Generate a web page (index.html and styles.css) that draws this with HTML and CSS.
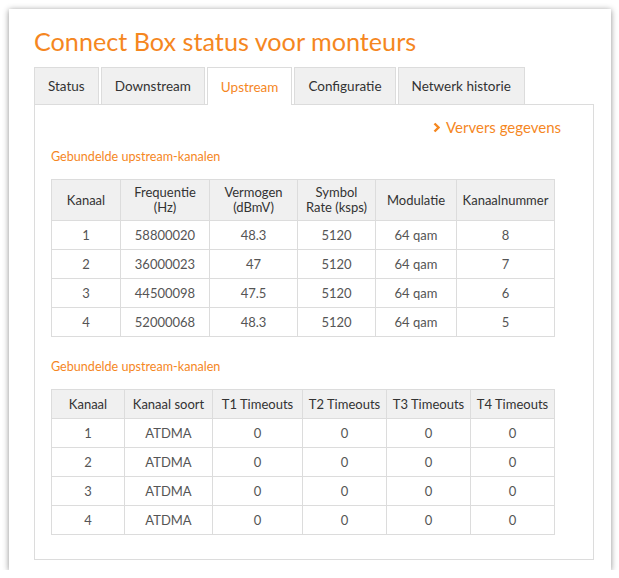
FILE: index.html
```html
<!DOCTYPE html>
<html>
<head>
<meta charset="utf-8">
<link rel="stylesheet" href="styles.css">
</head>
<body>
<div class="card">
  <h1 class="title">Connect Box status voor monteurs</h1>
  <ul class="tabs">
    <li class="tab">Status</li>
    <li class="tab">Downstream</li>
    <li class="tab active">Upstream</li>
    <li class="tab">Configuratie</li>
    <li class="tab">Netwerk historie</li>
  </ul>
  <div class="panel">
    <div class="refresh"><svg class="chev" width="7" height="11" viewBox="0 0 7 11"><polyline points="1.5,1.5 5.5,5.5 1.5,9.5" fill="none" stroke="#f5871f" stroke-width="2.4"/></svg><span>Ververs gegevens</span></div>
    <h2 class="section">Gebundelde upstream-kanalen</h2>
    <table class="grid grid1">
      <colgroup><col style="width:69px"><col style="width:89px"><col style="width:88px"><col style="width:78px"><col style="width:81px"><col style="width:98px"></colgroup>
      <thead>
        <tr class="tall"><th>Kanaal</th><th>Frequentie<br>(Hz)</th><th>Vermogen<br>(dBmV)</th><th>Symbol<br>Rate (ksps)</th><th>Modulatie</th><th>Kanaalnummer</th></tr>
      </thead>
      <tbody>
        <tr><td>1</td><td>58800020</td><td>48.3</td><td>5120</td><td>64 qam</td><td>8</td></tr>
        <tr><td>2</td><td>36000023</td><td>47</td><td>5120</td><td>64 qam</td><td>7</td></tr>
        <tr><td>3</td><td>44500098</td><td>47.5</td><td>5120</td><td>64 qam</td><td>6</td></tr>
        <tr><td>4</td><td>52000068</td><td>48.3</td><td>5120</td><td>64 qam</td><td>5</td></tr>
      </tbody>
    </table>
    <h2 class="section second">Gebundelde upstream-kanalen</h2>
    <table class="grid">
      <colgroup><col style="width:73px"><col style="width:88px"><col style="width:90px"><col style="width:84px"><col style="width:84px"><col style="width:84px"></colgroup>
      <thead>
        <tr><th>Kanaal</th><th>Kanaal soort</th><th>T1 Timeouts</th><th>T2 Timeouts</th><th>T3 Timeouts</th><th>T4 Timeouts</th></tr>
      </thead>
      <tbody>
        <tr><td>1</td><td>ATDMA</td><td>0</td><td>0</td><td>0</td><td>0</td></tr>
        <tr><td>2</td><td>ATDMA</td><td>0</td><td>0</td><td>0</td><td>0</td></tr>
        <tr><td>3</td><td>ATDMA</td><td>0</td><td>0</td><td>0</td><td>0</td></tr>
        <tr><td>4</td><td>ATDMA</td><td>0</td><td>0</td><td>0</td><td>0</td></tr>
      </tbody>
    </table>
  </div>
</div>
</body>
</html>
```

FILE: styles.css
```css
html, body {
  margin: 0;
  padding: 0;
  background: #ffffff;
}
body {
  font-family: Lato, "Open Sans", sans-serif;
  padding: 9px 0 0 9px;
}
.card {
  width: 602px;
  height: 561px;
  box-sizing: border-box;
  background: #fff;
  box-shadow: 0 1px 6px rgba(0,0,0,0.45);
  padding: 17px 17px 0 25px;
}
.title {
  margin: 0 0 11px 0;
  font-weight: normal;
  font-size: 25.2px;
  line-height: 30px;
  color: #f5871f;
}
.tabs {
  list-style: none;
  margin: 0;
  padding: 0;
  display: flex;
  gap: 2px;
  height: 37px;
  position: relative;
  z-index: 1;
}
.tab {
  box-sizing: border-box;
  height: 37px;
  padding: 0 13px;
  display: flex;
  align-items: center;
  border: 1px solid #dcdcdc;
  border-bottom: none;
  background: #f0f0f0;
  font-size: 13.5px;
  color: #333;
}
.tab.active {
  background: #fff;
  color: #f5871f;
  height: 38px;
}
.panel {
  box-sizing: border-box;
  width: 560px;
  height: 456px;
  border: 1px solid #dcdcdc;
  padding: 0 0 0 16px;
}
.refresh {
  margin-top: 12px;
  height: 20px;
  display: flex;
  align-items: center;
  justify-content: flex-end;
  padding-right: 32px;
  color: #f5871f;
  font-size: 15px;
  gap: 6px;
}
.chev {
  display: block;
}
.section {
  margin: 12px 0 0 0;
  font-weight: normal;
  font-size: 12.6px;
  line-height: 16px;
  color: #f5871f;
}
.section.second {
  margin-top: 22px;
}
.grid {
  margin-top: 14px;
  border-collapse: collapse;
  table-layout: fixed;
  width: 504px;
  font-size: 13px;
}
.grid th, .grid td {
  border: 1px solid #dcdcdc;
  text-align: center;
  padding: 0;
  height: 28px;
}
.grid th {
  background: #f0f0f0;
  font-weight: normal;
  color: #333;
  line-height: 15px;
}
.grid td {
  color: #555;
}
.grid .tall th {
  height: 40px;
}
```
